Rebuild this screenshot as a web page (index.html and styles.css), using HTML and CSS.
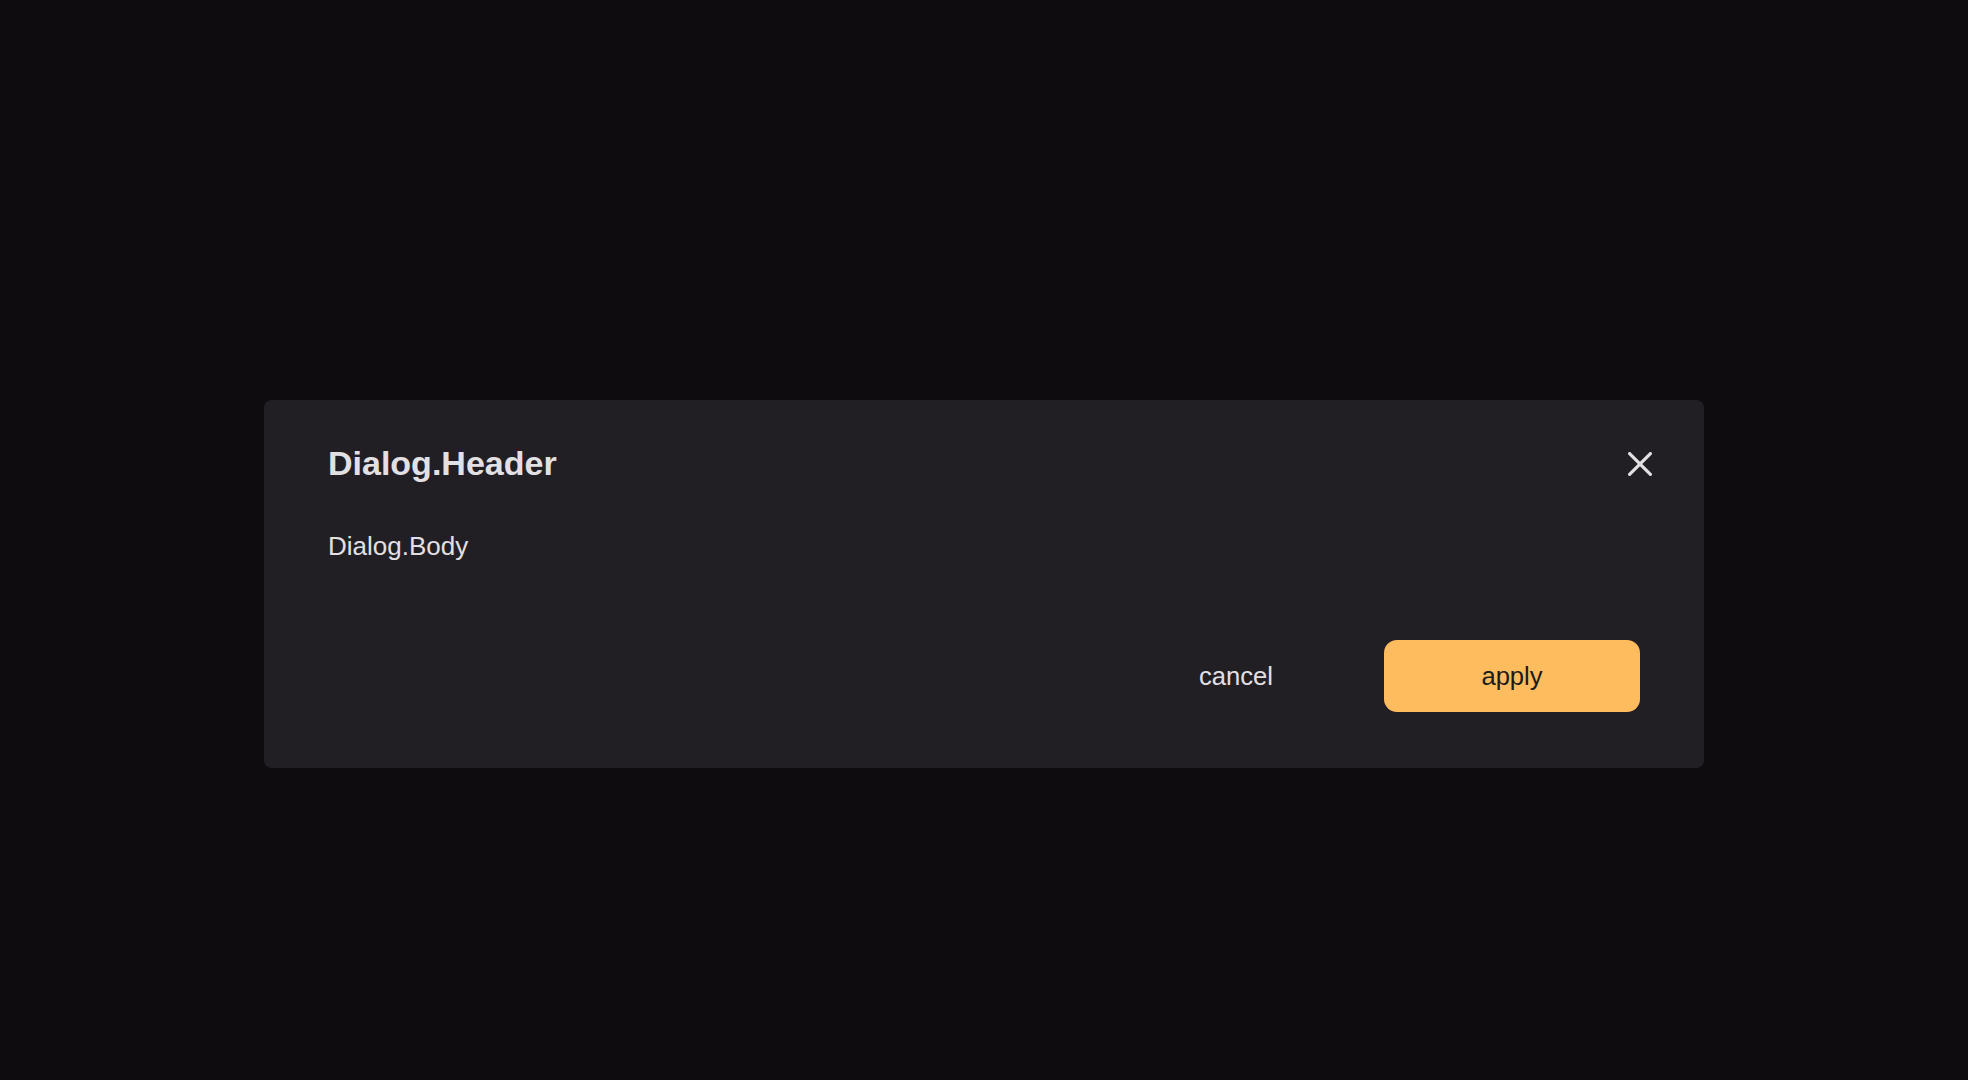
FILE: index.html
```html
<!DOCTYPE html>
<html lang="en">
<head>
<meta charset="utf-8">
<title>Dialog</title>
<link rel="stylesheet" href="styles.css">
</head>
<body>
<div class="page">
  <div class="dialog" role="dialog">
    <div class="dialog-header">
      <h2 class="dialog-title">Dialog.Header</h2>
      <button class="close-btn" aria-label="close">
        <svg width="24" height="24" viewBox="0 0 24 24" fill="none" stroke="currentColor" stroke-width="3.2" stroke-linecap="round">
          <path d="M1.6 1.6 L22.4 22.4 M22.4 1.6 L1.6 22.4"/>
        </svg>
      </button>
    </div>
    <div class="dialog-body">Dialog.Body</div>
    <div class="dialog-footer">
      <button class="btn btn-ghost">cancel</button>
      <button class="btn btn-primary">apply</button>
    </div>
  </div>
</div>
</body>
</html>
```

FILE: styles.css
```css
html, body {
  margin: 0;
  padding: 0;
  height: 100%;
}
body {
  background: #0e0c0f;
  font-family: "Liberation Sans", Arial, sans-serif;
  color: #e3e0e4;
}
.page {
  display: flex;
  justify-content: center;
  padding-top: 400px;
}
.dialog {
  width: 1440px;
  box-sizing: border-box;
  background: #221f24;
  border-radius: 8px;
  padding: 44px 64px 56px 64px;
}
.dialog-header {
  display: flex;
  align-items: center;
  justify-content: space-between;
}
.dialog-title {
  margin: 0;
  font-size: 34px;
  font-weight: 700;
  line-height: 39px;
  color: #e3e0e4;
}
.close-btn {
  width: 24px;
  height: 24px;
  padding: 0;
  margin-right: -12px;
  border: 0;
  background: transparent;
  color: #e3e0e4;
  display: flex;
  cursor: pointer;
}
.dialog-body {
  margin-top: 48px;
  font-size: 26px;
  line-height: 30px;
}
.dialog-footer {
  margin-top: 79px;
  display: flex;
  justify-content: flex-end;
  gap: 20px;
}
.btn {
  width: 256px;
  height: 72px;
  border: 0;
  border-radius: 13px;
  font-family: "Liberation Sans", Arial, sans-serif;
  font-size: 25.6px;
  cursor: pointer;
}
.btn-ghost {
  background: transparent;
  color: #e3e0e4;
}
.btn-primary {
  background: #fdbd5e;
  color: #1b1a1c;
}
```
